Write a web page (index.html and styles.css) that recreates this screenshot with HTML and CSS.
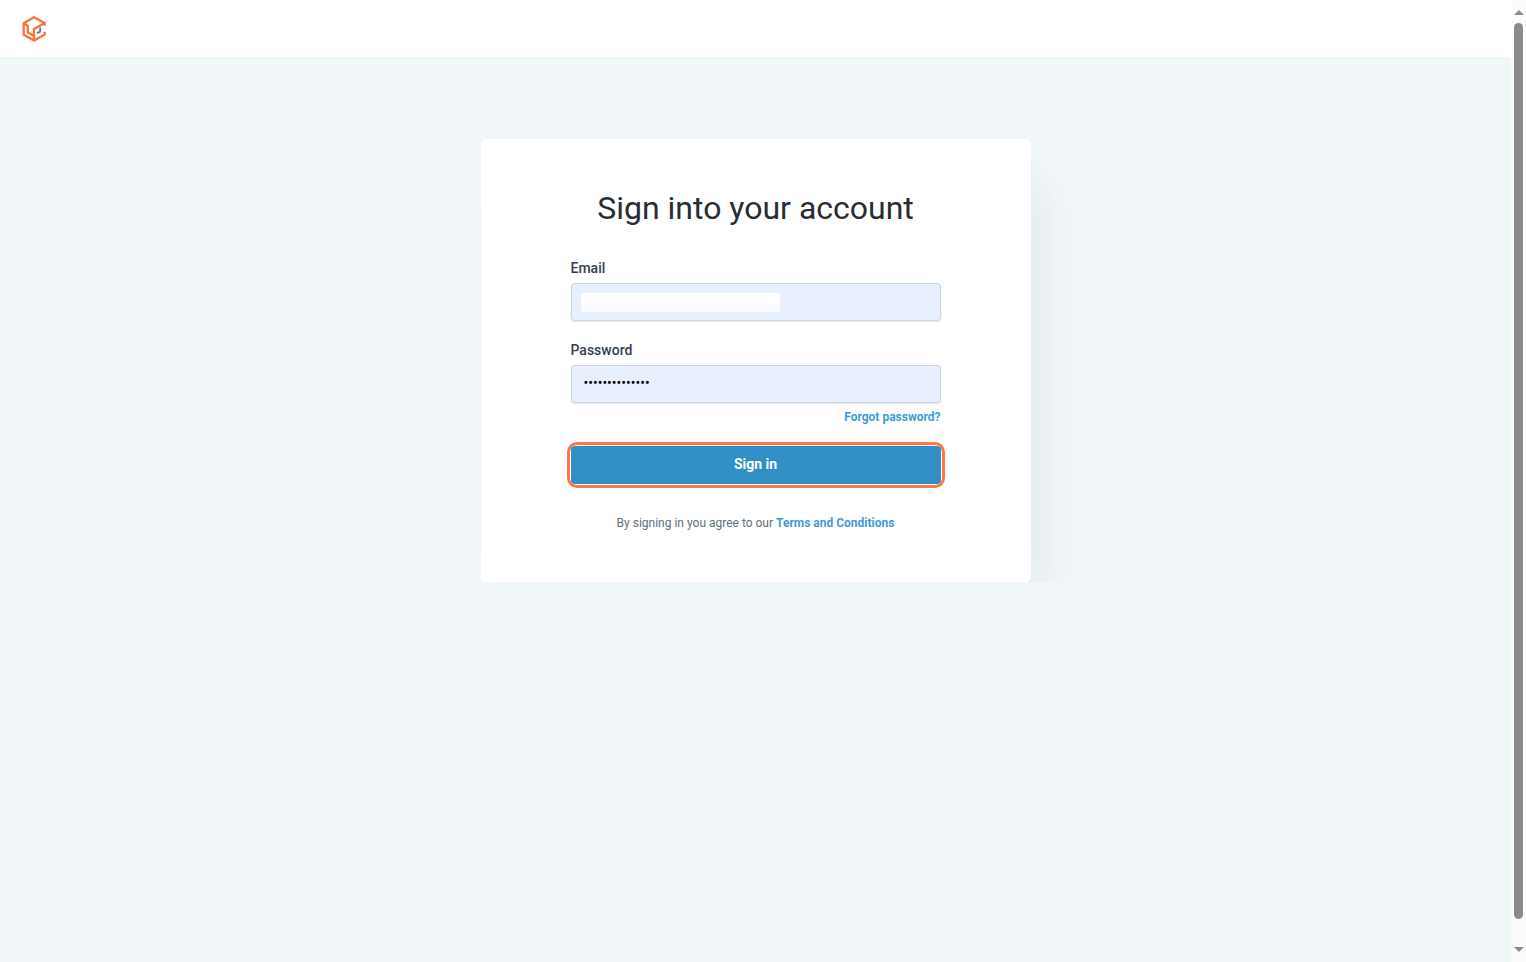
FILE: index.html
```html
<!DOCTYPE html>
<html lang="en">
<head>
<meta charset="utf-8">
<title>Sign in</title>
<link rel="stylesheet" href="styles.css">
</head>
<body>
<div class="page">
  <header class="topbar">
    <svg class="logo" viewBox="0 0 26 28" fill="none" stroke="#ff7139" stroke-width="2.3" stroke-linejoin="round">
      <path d="M23.7 10.8V8L13 2.2 2.7 8.2V19.8L13 25.6 23.7 19.6V16.8"/>
      <path d="M2.7 8.2L6.8 10.8V17.4L12.6 20.6"/>
      <path d="M13 25.6V14L23.7 8"/>
      <path d="M19.2 12.6V16.6L16 18.2" stroke="#727983" stroke-width="1.9"/>
    </svg>
  </header>
  <main class="content">
    <form class="card">
      <h1 class="title">Sign into your account</h1>
      <label class="label">Email</label>
      <div class="field"><span class="mask"></span></div>
      <label class="label">Password</label>
      <div class="field"><span class="dots">••••••••••••••</span></div>
      <a class="link forgot">Forgot password?</a>
      <div class="ring"><button class="submit" type="button">Sign in</button></div>
      <p class="terms">By signing in you agree to our <a class="link">Terms and Conditions</a></p>
    </form>
  </main>
</div>
<div class="scrollbar">
  <svg class="arrow" viewBox="0 0 10 5"><path d="M0 5L5 0L10 5Z"/></svg>
  <div class="thumb"></div>
  <svg class="arrow arrow-down" viewBox="0 0 10 5"><path d="M0 0L5 5L10 0Z"/></svg>
</div>
</body>
</html>
```
FILE: styles.css
```css
* { box-sizing: border-box; }
body {
  margin: 0;
  height: 962px;
  display: flex;
  overflow: hidden;
  background: #f1f7f9;
  font-family: Roboto, "Liberation Sans", sans-serif;
}
.page { width: 1511px; }
.topbar {
  height: 59px;
  padding: 15px 0 0 21px;
  background: #fff;
  border-bottom: 1px solid #e6edf0;
}
.logo { display: block; width: 26px; height: 28px; }
.content {
  height: 523px;
  padding-top: 80px;
  display: flex;
  justify-content: center;
  align-items: flex-start;
  overflow: hidden;
}
.card {
  width: 550px;
  height: 443px;
  padding: 48px 90px 0;
  display: flex;
  flex-direction: column;
  background: #fff;
  border-radius: 5px;
  box-shadow: 20px 30px 60px -18px rgba(0, 0, 0, .07), 10px 20px 50px rgba(0, 0, 0, .01);
}
.title {
  margin: 0 0 30px;
  font-size: 32px;
  line-height: 42px;
  font-weight: 400;
  text-align: center;
  color: #272d33;
  white-space: nowrap;
}
.label {
  height: 24px;
  font-size: 14px;
  line-height: 18px;
  font-weight: 500;
  color: #333f50;
}
.field {
  flex: none;
  height: 38px;
  margin-bottom: 20px;
  padding: 9px;
  background: #e8effd;
  border: 1px solid #cbd3de;
  border-radius: 4px;
  box-shadow: 0 1px 2px rgba(0, 0, 0, .1);
}
.mask {
  display: block;
  width: 199px;
  height: 19px;
  background: linear-gradient(#fff 55%, #f9fbff 60%);
}
.dots {
  display: block;
  padding-left: 3px;
  font-size: 14px;
  line-height: 16px;
  color: #000;
}
.link { color: #3e9bd6; font-weight: 700; }
.forgot {
  margin-top: -14px;
  height: 37px;
  align-self: flex-end;
  font-size: 12px;
  line-height: 16px;
}
.ring {
  flex: none;
  display: flex;
  height: 46px;
  margin: -4px;
  padding: 1px;
  border: 3px solid #ff7643;
  border-radius: 10px;
}
.submit {
  flex: 1;
  padding: 0 0 2px;
  border: 0;
  border-radius: 4px;
  background: #318fc5;
  color: #fff;
  font: 700 14px Roboto, sans-serif;
}
.terms {
  margin: 31px 0 0;
  font-size: 12px;
  line-height: 16px;
  text-align: center;
  color: #62707c;
}
.scrollbar {
  width: 15px;
  height: 962px;
  padding: 10px 0 10px 3px;
  display: flex;
  flex-direction: column;
  background: #fcfcfc;
}
.arrow { flex: none; width: 10px; height: 5px; fill: #8b8b8b; }
.thumb {
  width: 9px;
  height: 896px;
  margin-top: 8px;
  border-radius: 5px;
  background: #8b8b8b;
}
.arrow-down { margin-top: 28px; }
```
